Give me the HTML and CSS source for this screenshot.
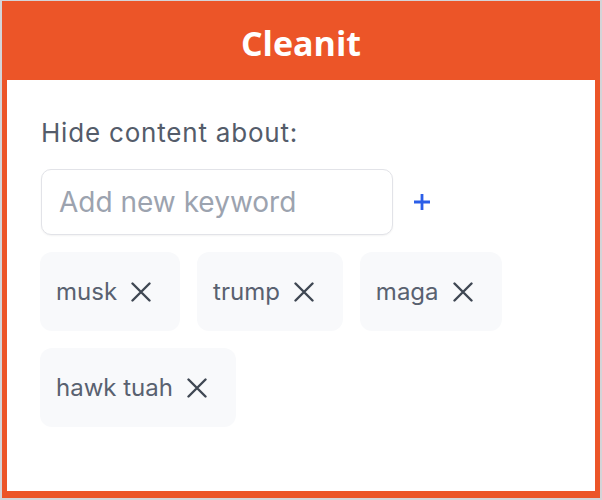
FILE: index.html
```html
<!DOCTYPE html>
<html lang="en">
<head>
  <meta charset="UTF-8">
  <title>Cleanit</title>
  <link rel="stylesheet" href="styles.css">
</head>
<body>

<div class="popup">
  <header class="popup-header">
    <h1>Cleanit</h1>
  </header>

  <main class="panel">
    <p class="label">Hide content about:</p>

    <form class="add-row">
      <input type="text" class="keyword-input" placeholder="Add new keyword">
      <button type="button" class="add-btn" aria-label="Add">
        <svg width="18" height="18" viewBox="0 0 18 18"><path d="M9 1v16M1 9h16" stroke="currentColor" stroke-width="2.8" fill="none"/></svg>
      </button>
    </form>

    <ul class="chips">
      <li class="chip">
        <span>musk</span>
        <button type="button" class="remove" aria-label="Remove">
          <svg width="20" height="20" viewBox="0 0 20 20"><path d="M1.5 1.5l17 17M18.5 1.5l-17 17" stroke="currentColor" stroke-width="2.4" stroke-linecap="round" fill="none"/></svg>
        </button>
      </li>
      <li class="chip">
        <span>trump</span>
        <button type="button" class="remove" aria-label="Remove">
          <svg width="20" height="20" viewBox="0 0 20 20"><path d="M1.5 1.5l17 17M18.5 1.5l-17 17" stroke="currentColor" stroke-width="2.4" stroke-linecap="round" fill="none"/></svg>
        </button>
      </li>
      <li class="chip">
        <span>maga</span>
        <button type="button" class="remove" aria-label="Remove">
          <svg width="20" height="20" viewBox="0 0 20 20"><path d="M1.5 1.5l17 17M18.5 1.5l-17 17" stroke="currentColor" stroke-width="2.4" stroke-linecap="round" fill="none"/></svg>
        </button>
      </li>
      <li class="chip">
        <span>hawk tuah</span>
        <button type="button" class="remove" aria-label="Remove">
          <svg width="20" height="20" viewBox="0 0 20 20"><path d="M1.5 1.5l17 17M18.5 1.5l-17 17" stroke="currentColor" stroke-width="2.4" stroke-linecap="round" fill="none"/></svg>
        </button>
      </li>
    </ul>
  </main>
</div>

</body>
</html>
```

FILE: styles.css
```css
html, body {
  margin: 0;
  height: 100%;
}
body {
  background: #d4d4d8;
  font-family: Inter, "Liberation Sans", sans-serif;
  padding: 1px 2px 2px 2px;
  box-sizing: border-box;
}
.popup {
  height: 100%;
  background: #ec5528;
  padding: 0 5px 7px 5px;
  box-sizing: border-box;
  display: flex;
  flex-direction: column;
}
.popup-header {
  height: 79px;
  padding-top: 5px;
  box-sizing: border-box;
  display: flex;
  align-items: center;
  justify-content: center;
}
.popup-header h1 {
  margin: 0;
  color: white;
  font-family: "Open Sans", sans-serif;
  font-weight: 700;
  font-size: 34px;
}
.panel {
  flex: 1;
  background: white;
  padding: 37px 34px;
}
.label {
  margin: 0 0 20px 0;
  font-size: 26px;
  line-height: 32px;
  letter-spacing: 0.8px;
  color: #545c6a;
}
.add-row {
  display: flex;
  align-items: center;
  gap: 16px;
}
.keyword-input {
  width: 352px;
  height: 66px;
  box-sizing: border-box;
  border: 1.5px solid #e2e3e8;
  border-radius: 10px;
  padding: 0 17px;
  font-family: inherit;
  font-size: 28px;
  color: #374151;
  box-shadow: 0 1px 2px rgba(0,0,0,0.05);
}
.keyword-input::placeholder {
  color: #9ca3af;
}
.add-btn {
  border: none;
  background: none;
  padding: 4px;
  color: #2b5ee8;
  display: flex;
}
.chips {
  list-style: none;
  margin: 17px 0 0 -1px;
  padding: 0;
  display: flex;
  flex-wrap: wrap;
  gap: 17px;
}
.chip {
  background: #f8f9fb;
  border-radius: 12px;
  height: 79px;
  box-sizing: border-box;
  padding: 0 29px 0 16px;
  display: flex;
  align-items: center;
  gap: 14px;
  font-size: 24px;
  color: #596170;
}
.remove {
  border: none;
  background: none;
  padding: 0;
  color: #3f4753;
  display: flex;
}
```
